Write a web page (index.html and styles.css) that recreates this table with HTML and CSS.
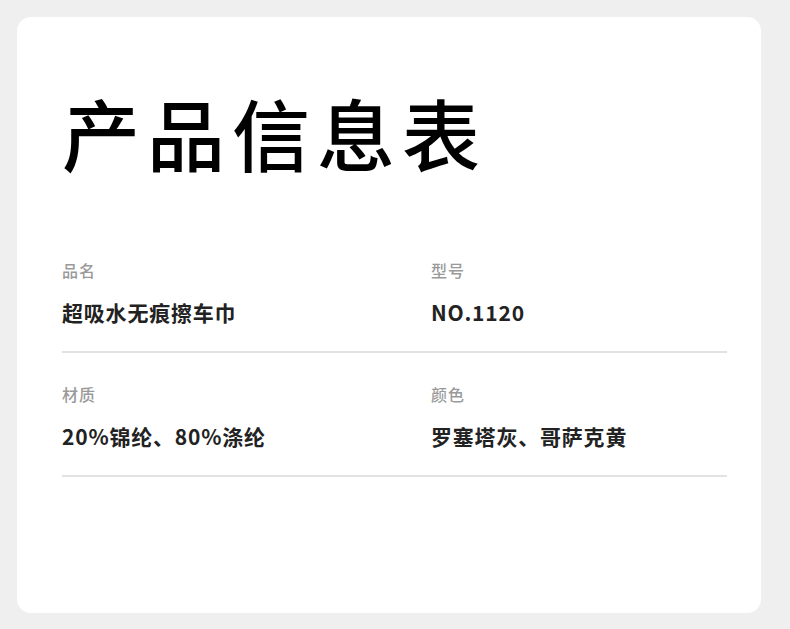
FILE: index.html
```html
<!DOCTYPE html>
<html>
<head>
    <meta charset="utf-8">
    <title>产品信息表</title>
    <link rel="stylesheet" href="styles.css">
</head>
<body>
    <div class="card">
        <h1 class="title">产品信息表</h1>
        <div class="info">
            <div class="row">
                <div class="cell">
                    <div class="label">品名</div>
                    <div class="value">超吸水无痕擦车巾</div>
                </div>
                <div class="cell">
                    <div class="label">型号</div>
                    <div class="value">NO.1120</div>
                </div>
            </div>
            <div class="row">
                <div class="cell">
                    <div class="label">材质</div>
                    <div class="value">20%锦纶、80%涤纶</div>
                </div>
                <div class="cell">
                    <div class="label">颜色</div>
                    <div class="value">罗塞塔灰、哥萨克黄</div>
                </div>
            </div>
        </div>
    </div>
</body>
</html>
```

FILE: styles.css
```css
body {
    margin: 0;
    padding: 17px;
    background-color: #efefef;
    font-family: "Noto Sans CJK SC", "Noto Sans", sans-serif;
}
.card {
    background-color: #fff;
    border-radius: 14px;
    width: 744px;
    height: 596px;
    box-sizing: border-box;
    padding: 76px 34px 0 45px;
}
.title {
    margin: 0;
    font-size: 78px;
    line-height: 78px;
    font-weight: 500;
    letter-spacing: 7px;
    color: #000;
}
.info {
    margin-top: 87px;
}
.row {
    display: grid;
    grid-template-columns: 369px 1fr;
    padding-bottom: 25px;
    border-bottom: 2px solid #e2e2e2;
}
.row + .row {
    padding-top: 29px;
}
.label {
    font-size: 16px;
    line-height: 24px;
    font-weight: 500;
    color: #9a9a9a;
    letter-spacing: 1px;
}
.value {
    margin-top: 16px;
    font-size: 21px;
    line-height: 28px;
    font-weight: 700;
    color: #222;
    letter-spacing: 0.8px;
}
```
